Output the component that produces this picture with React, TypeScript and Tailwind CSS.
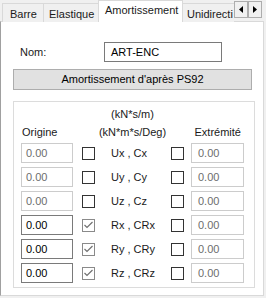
import React from 'react';

const font = { fontFamily: '"Liberation Sans", Arial, sans-serif' };

interface RowProps {
  label: string;
  left: boolean;
  checked: boolean;
}

const rows: RowProps[] = [
  { label: 'Ux , Cx', left: false, checked: false },
  { label: 'Uy , Cy', left: false, checked: false },
  { label: 'Uz , Cz', left: false, checked: false },
  { label: 'Rx , CRx', left: true, checked: true },
  { label: 'Ry , CRy', left: true, checked: true },
  { label: 'Rz , CRz', left: true, checked: true },
];

function CheckBox({ checked }: { checked: boolean }) {
  return (
    <div
      className={
        'w-[13px] h-[13px] bg-white border shrink-0 flex items-center justify-center ' +
        (checked ? 'border-[#8a8a8a]' : 'border-[#333333]')
      }
    >
      {checked && (
        <svg width="11" height="11" viewBox="0 0 11 11">
          <path d="M1.5 5 L4 7.5 L9.5 2" fill="none" stroke="#707070" strokeWidth="1.2" />
        </svg>
      )}
    </div>
  );
}

function Field({ active, className }: { active: boolean; className: string }) {
  return (
    <div
      className={
        'h-[20px] bg-white border flex items-center text-[11px] shrink-0 ' +
        (active ? 'border-[#7a7a7a] text-black ' : 'border-[#cccccc] text-[#6d6d6d] ') +
        className
      }
    >
      0.00
    </div>
  );
}

function Arrow({ dir }: { dir: 'left' | 'right' }) {
  return (
    <div className="w-[14px] h-[17px] border border-[#adadad] bg-[#f0f0f0] flex items-center justify-center">
      <svg width="4" height="7" viewBox="0 0 4 7">
        {dir === 'left' ? <path d="M4 0 L0 3.5 L4 7 Z" fill="#000" /> : <path d="M0 0 L4 3.5 L0 7 Z" fill="#000" />}
      </svg>
    </div>
  );
}

export default function App() {
  return (
    <div className="w-[266px] h-[298px] bg-[#f0f0f0] overflow-hidden text-[11px] text-[#1a1a1a]" style={font}>
      {/* tab strip */}
      <div className="flex items-end h-[22px] pl-[2px]">
        <div className="w-[42px] h-[19px] border border-b-0 border-[#d9d9d9] bg-[#f0f0f0] flex items-center pl-[7px] pt-[2px]">
          Barre
        </div>
        <div className="w-[55px] h-[19px] border-t border-r border-[#d9d9d9] bg-[#f0f0f0] flex items-center pl-[5px] pt-[2px]">
          Elastique
        </div>
        <div className="relative z-10 -ml-px w-[85px] h-[22px] border border-b-0 border-[#d9d9d9] bg-white flex items-center pl-[6px] pb-[2px]">
          Amortissement
        </div>
        <div className="w-[51px] h-[19px] border-t border-[#d9d9d9] bg-[#f0f0f0] flex items-center pl-[4px] pt-[2px] whitespace-nowrap">
          Unidirecti
        </div>
        <div className="self-start mt-[1px] flex">
          <Arrow dir="left" />
          <Arrow dir="right" />
        </div>
      </div>

      {/* page */}
      <div className="-mt-px w-[264px] h-[275px] bg-white border border-[#d9d9d9] border-l-[#a0a0a0]">
        <div className="flex items-center mt-[20px] pl-[19px]">
          <span className="w-[84px]">Nom:</span>
          <div className="w-[118px] h-[20px] border border-[#7a7a7a] flex items-center pl-[6px] text-black">ART-ENC</div>
        </div>

        <div className="mt-[7px] ml-[12px] w-[239px] h-[21px] bg-[#e1e1e1] border border-[#adadad] flex items-center justify-center text-black">
          Amortissement d'après PS92
        </div>

        <div className="mt-[11px] ml-[12px] w-[242px] h-[187px] border border-[#dcdcdc] pl-[7px] pr-[10px] pt-[3px]">
          <div className="grid grid-cols-[1fr_auto_1fr] leading-[18px]">
            <span className="self-end pl-[1px]">Origine</span>
            <div className="flex flex-col items-center">
              <span>(kN*s/m)</span>
              <span>(kN*m*s/Deg)</span>
            </div>
            <span className="self-end text-right pr-[3px]">Extrémité</span>
          </div>

          <div className="mt-[2px] flex flex-col gap-1">
            {rows.map((r) => (
              <div key={r.label} className="flex items-center h-[20px]">
                <Field active={r.left} className="w-[52px] pl-[4px]" />
                <div className="ml-[9px]">
                  <CheckBox checked={r.checked} />
                </div>
                <span className="flex-1 pl-[16px] text-[#1a1a1a]">{r.label}</span>
                <CheckBox checked={false} />
                <Field active={false} className="ml-[7px] w-[53px] pl-[6px]" />
              </div>
            ))}
          </div>
        </div>
      </div>
    </div>
  );
}
